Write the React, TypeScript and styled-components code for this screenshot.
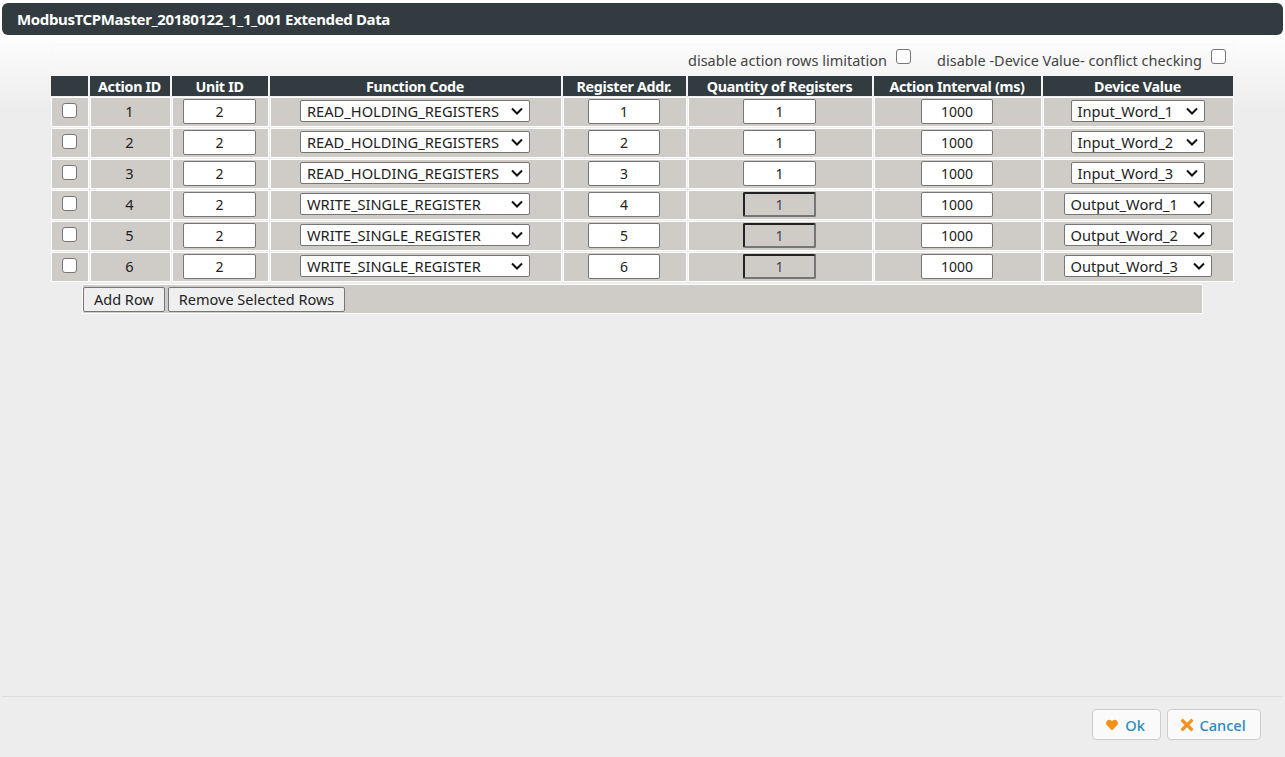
import styled, { createGlobalStyle } from "styled-components";
import { FaHeart, FaTimes } from "react-icons/fa";

const GlobalStyle = createGlobalStyle`
  html, body {
    margin: 0;
    padding: 0;
    height: 100%;
    overflow: hidden;
  }
  body {
    font-family: "Noto Sans", "Open Sans", sans-serif;
    font-size: 14.6px;
    color: #222;
  }
`;

const chevron =
  "data:image/svg+xml,%3Csvg xmlns='http://www.w3.org/2000/svg' width='12' height='8' viewBox='0 0 12 8'%3E%3Cpath d='M1 1.5l5 5 5-5' fill='none' stroke='%23111' stroke-width='2'/%3E%3C/svg%3E";

const Dialog = styled.div`
  display: flex;
  flex-direction: column;
  height: 757px;
  box-sizing: border-box;
  padding: 3px 2px 0;
  background: linear-gradient(to bottom, #ffffff 30px, #ededed 110px);
`;

const TitleBar = styled.div`
  height: 32px;
  flex: none;
  display: flex;
  align-items: center;
  padding-left: 15px;
  border-radius: 6px;
  background-color: #323c40;
  color: #fff;
  font-size: 15px;
  font-weight: 700;
  letter-spacing: -0.36px;
`;

const Content = styled.div`
  flex: 1;
  padding: 9px 49px 0 48px;
`;

const Options = styled.div`
  width: 1183px;
  height: 28px;
  margin-left: 1px;
  box-sizing: border-box;
  border: 1px solid #f8f8f8;
  display: flex;
  justify-content: flex-end;
  align-items: center;
  gap: 26px;
  padding: 3px 7px 0 0;
  color: #444;
  font-size: 14.5px;
`;

const OptionLabel = styled.label`
  display: flex;
  align-items: center;
  gap: 9px;
`;

const Check = styled.input.attrs({ type: "checkbox" })`
  appearance: none;
  width: 15px;
  height: 15px;
  margin: 0;
  box-sizing: border-box;
  border: 1px solid #767676;
  border-radius: 3px;
  background: #fff;
`;

const OptionCheck = styled(Check)`
  margin-top: -6px;
`;

const Table = styled.table`
  width: 1185px;
  margin-top: 3px;
  table-layout: fixed;
  border-collapse: separate;
  border-spacing: 1px;
`;

const HeadCell = styled.th`
  height: 19px;
  padding: 0 1px 0 0;
  border-right: 1px solid #f4f4f4;
  background-color: #323c40;
  color: #fff;
  font-size: 14.3px;
  font-weight: 700;
  letter-spacing: -0.3px;
  line-height: 19px;
  text-align: center;
  background-clip: padding-box;
`;

const HeadRow = styled.tr`
  height: 20px;
`;

const Cell = styled.td`
  height: 26px;
  padding: 0 2px 2px 0;
  border: 1px solid #fff;
  background-color: #cfccc7;
  text-align: center;
  vertical-align: middle;
`;

const Row = styled.tr`
  height: 30px;
`;

const RowCheck = styled(Check)`
  display: block;
  margin: -1px 0 0 10px;
`;

const NumberInput = styled.input`
  display: block;
  width: 72.5px;
  height: 25px;
  margin: 0 auto;
  box-sizing: border-box;
  padding: 0;
  border: 1px solid #767676;
  border-radius: 2px;
  background: #fff;
  color: #222;
  font-family: inherit;
  font-size: 14px;
  text-align: center;
`;

const LockedInput = styled(NumberInput)`
  border-width: 2px;
  border-style: solid;
  border-color: #222 #767676 #767676 #222;
  background: #cfccc7;
  color: #444;
`;

const Select = styled.select<{ $width: number }>`
  display: block;
  appearance: none;
  width: ${(p) => p.$width}px;
  height: 22px;
  margin: 0 auto;
  box-sizing: border-box;
  padding: 0 0 0 6px;
  border: 1px solid #767676;
  border-radius: 2px;
  background: #fff url("${chevron}") no-repeat right 6px center;
  color: #222;
  font-family: inherit;
  font-size: 14.65px;
`;

const RowActions = styled.div`
  width: 1121px;
  height: 30px;
  margin: 1px 0 0 32px;
  box-sizing: border-box;
  border: 1px solid #fff;
  background-color: #cfccc7;
  display: flex;
  align-items: center;
  gap: 3px;
`;

const PlainButton = styled.button`
  height: 25px;
  box-sizing: border-box;
  padding: 0 10px;
  border: 1px solid #767676;
  border-radius: 2px;
  background-color: #efefef;
  color: #222;
  font-family: inherit;
  font-size: 14.5px;
`;

const Footer = styled.div`
  flex: none;
  height: 61px;
  box-sizing: border-box;
  border-top: 1px solid #ddd;
  display: flex;
  justify-content: flex-end;
  align-items: flex-start;
  gap: 6px;
  padding: 12px 22px 0 0;
`;

const DialogButton = styled.button`
  height: 31px;
  box-sizing: border-box;
  display: flex;
  align-items: center;
  justify-content: center;
  gap: 7px;
  padding: 0 2px 0 0;
  border: 1px solid #ccc;
  border-radius: 4px;
  background-color: #fafafa;
  color: #2a8ac0;
  font-family: inherit;
  font-size: 14.6px;
  font-weight: 500;
  svg {
    color: #f5921e;
  }
`;

const OkButton = styled(DialogButton)`
  width: 69px;
  svg {
    font-size: 12px;
  }
`;

const CancelButton = styled(DialogButton)`
  width: 94px;
  svg {
    font-size: 18px;
    margin: 0 -4px 0 -2px;
  }
`;

type ActionRow = {
  id: number;
  fn: string;
  device: string;
  deviceWidth: number;
  locked: boolean;
};

const rows: ActionRow[] = [
  { id: 1, fn: "READ_HOLDING_REGISTERS", device: "Input_Word_1", deviceWidth: 134, locked: false },
  { id: 2, fn: "READ_HOLDING_REGISTERS", device: "Input_Word_2", deviceWidth: 134, locked: false },
  { id: 3, fn: "READ_HOLDING_REGISTERS", device: "Input_Word_3", deviceWidth: 134, locked: false },
  { id: 4, fn: "WRITE_SINGLE_REGISTER", device: "Output_Word_1", deviceWidth: 148, locked: true },
  { id: 5, fn: "WRITE_SINGLE_REGISTER", device: "Output_Word_2", deviceWidth: 148, locked: true },
  { id: 6, fn: "WRITE_SINGLE_REGISTER", device: "Output_Word_3", deviceWidth: 148, locked: true },
];

const columns = [38, 81, 97, 292, 124, 185, 168, 191];
const headers = [
  "",
  "Action ID",
  "Unit ID",
  "Function Code",
  "Register Addr.",
  "Quantity of Registers",
  "Action Interval (ms)",
  "Device Value",
];

export default function App() {
  return (
    <Dialog>
      <GlobalStyle />
      <TitleBar>ModbusTCPMaster_20180122_1_1_001 Extended Data</TitleBar>
      <Content>
        <Options>
          <OptionLabel>
            disable action rows limitation <OptionCheck />
          </OptionLabel>
          <OptionLabel>
            disable -Device Value- conflict checking <OptionCheck />
          </OptionLabel>
        </Options>
        <Table>
          <colgroup>
            {columns.map((w, i) => (
              <col key={i} width={w} />
            ))}
          </colgroup>
          <thead>
            <HeadRow>
              {headers.map((h, i) => (
                <HeadCell key={i}>{h}</HeadCell>
              ))}
            </HeadRow>
          </thead>
          <tbody>
            {rows.map((row) => (
              <Row key={row.id}>
                <Cell>
                  <RowCheck />
                </Cell>
                <Cell>{row.id}</Cell>
                <Cell>
                  <NumberInput defaultValue="2" />
                </Cell>
                <Cell>
                  <Select $width={230} defaultValue={row.fn}>
                    <option>READ_HOLDING_REGISTERS</option>
                    <option>WRITE_SINGLE_REGISTER</option>
                  </Select>
                </Cell>
                <Cell>
                  <NumberInput defaultValue={row.id} />
                </Cell>
                <Cell>
                  {row.locked ? (
                    <LockedInput defaultValue="1" disabled />
                  ) : (
                    <NumberInput defaultValue="1" />
                  )}
                </Cell>
                <Cell>
                  <NumberInput defaultValue="1000" />
                </Cell>
                <Cell>
                  <Select $width={row.deviceWidth} defaultValue={row.device}>
                    <option>{row.device}</option>
                  </Select>
                </Cell>
              </Row>
            ))}
          </tbody>
        </Table>
        <RowActions>
          <PlainButton>Add Row</PlainButton>
          <PlainButton>Remove Selected Rows</PlainButton>
        </RowActions>
      </Content>
      <Footer>
        <OkButton>
          <FaHeart /> Ok
        </OkButton>
        <CancelButton>
          <FaTimes /> Cancel
        </CancelButton>
      </Footer>
    </Dialog>
  );
}
